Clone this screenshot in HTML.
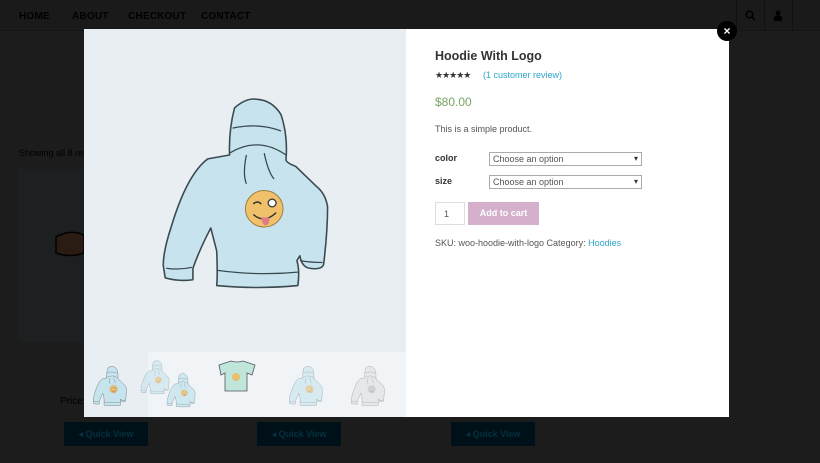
<!DOCTYPE html>
<html style="background:#1c1c1c"><head><meta charset="utf-8"><style>
*{margin:0;padding:0;box-sizing:border-box}
body{width:820px;height:463px;overflow:hidden;background:#1c1c1c;font-family:"Liberation Sans",sans-serif;position:relative}
.ov{position:absolute;left:0;top:0;width:820px;height:463px;background:#1c1c1c}
.nav{position:absolute;top:0;left:0;width:820px;height:31px;border-bottom:1px solid #151515;background:#1a1a1a}
.nav span{position:absolute;top:11px;font-size:10px;font-weight:bold;color:#000;letter-spacing:0.2px}
.bg{position:absolute;color:#000}
.modal{position:absolute;left:84px;top:29px;width:645px;height:388px;background:#fff}
.left{position:absolute;left:0;top:0;width:322px;height:388px;background:#e8eef2}
.thumbs{position:absolute;left:64px;top:323px;width:258px;height:65px;background:#f0f4f7}
.r{position:absolute;left:351px;color:#555}
.qv{position:absolute;top:422px;width:84px;height:24px;background:#001018;color:#05303f;font-size:9px;font-weight:bold;text-align:center;line-height:24px}
.sel{position:absolute;left:405px;width:153px;height:14px;border:1px solid #aaa;font-size:9px;color:#555;padding-left:3px;line-height:12px}
.sel:after{content:"▾";position:absolute;right:3px;top:0;font-size:8px;color:#333}
</style></head><body>
<div class="ov"></div>
<div class="nav">
<span style="left:19px">HOME</span><span style="left:72px">ABOUT</span><span style="left:128px">CHECKOUT</span><span style="left:201px">CONTACT</span>
<div style="position:absolute;left:736px;top:0;width:1px;height:31px;background:#111"></div>
<div style="position:absolute;left:764px;top:0;width:1px;height:31px;background:#111"></div>
<div style="position:absolute;left:792px;top:0;width:1px;height:31px;background:#111"></div>
<svg style="position:absolute;left:745px;top:10px" width="11" height="11"><circle cx="4.5" cy="4.5" r="3.3" fill="none" stroke="#000" stroke-width="1.5"/><path d="M7 7L10 10" stroke="#000" stroke-width="1.8"/></svg>
<svg style="position:absolute;left:774px;top:10px" width="8" height="11"><circle cx="4" cy="3" r="2.4" fill="#000"/><path d="M0 11V8Q0 5.5 4 5.5Q8 5.5 8 8V11Z" fill="#000"/></svg>
</div>
<div class="bg" style="left:19px;top:148px;font-size:9px">Showing all 8 results</div>
<div style="position:absolute;left:19px;top:169px;width:70px;height:173px;background:#1c2020"></div>
<svg style="position:absolute;left:50px;top:225px" width="40" height="40"><path d="M6 12Q20 4 34 10V28Q20 33 6 28Z" fill="#2a1c12" stroke="#000" stroke-width="1.5"/></svg>
<div class="bg" style="left:60px;top:396px;font-size:10px">Price:</div>
<div class="qv" style="left:64px">◂ Quick View</div>
<div class="qv" style="left:257px">◂ Quick View</div>
<div class="qv" style="left:451px">◂ Quick View</div>

<div class="modal">
<div class="left">
<div class="thumbs"></div>
<svg width="322" height="388" style="position:absolute;left:0;top:0">
<defs><g id="h">
<path d="M171 -8Q160 -10 148 1Q142 25 143 50L121 54Q100 70 84 125Q76 150 76 165L78 178Q92 182 106 180L106 168Q112 150 124 126L130 150Q131 175 130 186Q170 190 212 186Q214 170 211 160L214 155Q216 167 224 168Q236 170 238 164Q242 130 242 104Q240 90 230 82L210 62Q200 58 200 55Q202 30 195 8Q186 -7 171 -8Z" fill="#c7e4ee" stroke="#3a4a50" stroke-width="1.6" stroke-linejoin="round"/>
<path d="M146 22Q172 16 195 25M143 48Q172 30 200 50M130 170Q172 176 212 172M79 168Q92 170 105 167M214 160Q226 162 237 162M160 50Q156 70 160 80M178 48Q182 68 188 75" fill="none" stroke="#3a4a50" stroke-width="1.3"/>
<circle cx="178" cy="106" r="19" fill="#f0c16a" stroke="#a07a40" stroke-width="1"/>
<circle cx="186" cy="100" r="4" fill="#fff" stroke="#333" stroke-width="1.3"/>
<path d="M167 101Q171 97 175 101M167 112Q178 122 190 110" fill="none" stroke="#333" stroke-width="1.5"/>
<path d="M175 115Q176 124 180 123Q184 122 183 115Z" fill="#e07a84"/>
</g></defs>
<g transform="translate(4,78) scale(0.99,0.96)"><use href="#h"/></g>
<g transform="translate(-6,339) scale(0.2)"><use href="#h"/></g>
<g transform="translate(44,333) scale(0.17)" opacity="0.6"><use href="#h"/></g>
<g transform="translate(70,346) scale(0.17)" opacity="0.8"><use href="#h"/></g>
<g transform="translate(119,326) scale(0.2)"><path d="M80 50L140 30Q170 40 200 30L260 50L245 100L220 90L220 180L110 180L110 90L90 100Z" fill="#bfe6d8" stroke="#556" stroke-width="4"/><circle cx="165" cy="110" r="20" fill="#e8c070"/></g>
<g transform="translate(190,339) scale(0.2)" opacity="0.6"><use href="#h"/></g>
<g transform="translate(252,339) scale(0.2)" opacity="0.6" style="filter:grayscale(1)"><use href="#h"/></g>
</svg>
</div>
<div class="r" style="top:20px;font-size:12.5px;font-weight:bold;color:#333">Hoodie With Logo</div>
<div class="r" style="top:41px;font-size:9px;color:#333;letter-spacing:-1px">★★★★★</div>
<div class="r" style="left:399px;top:41px;font-size:9px;color:#2ba6cb">(1 customer review)</div>
<div class="r" style="top:66px;font-size:12px;color:#77a464">$80.00</div>
<div class="r" style="top:95px;font-size:9px">This is a simple product.</div>
<div class="r" style="top:124px;font-size:9px;font-weight:bold;color:#333">color</div>
<div class="sel" style="top:123px">Choose an option</div>
<div class="r" style="top:147px;font-size:9px;font-weight:bold;color:#333">size</div>
<div class="sel" style="top:146px">Choose an option</div>
<div style="position:absolute;left:351px;top:173px;width:30px;height:23px;border:1px solid #ddd;font-size:9px;color:#555;padding:6px 0 0 8px">1</div>
<div style="position:absolute;left:384px;top:173px;width:71px;height:23px;background:#d5b0cc;color:#fff;font-size:9px;font-weight:bold;text-align:center;line-height:23px">Add to cart</div>
<div class="r" style="top:209px;font-size:9px">SKU: woo-hoodie-with-logo Category: <span style="color:#2ba6cb">Hoodies</span></div>
</div>
<div style="position:absolute;left:717px;top:21px;width:20px;height:20px;border-radius:50%;background:#000;color:#fff;font-size:12px;font-weight:bold;text-align:center;line-height:20px">×</div>
</body></html>
